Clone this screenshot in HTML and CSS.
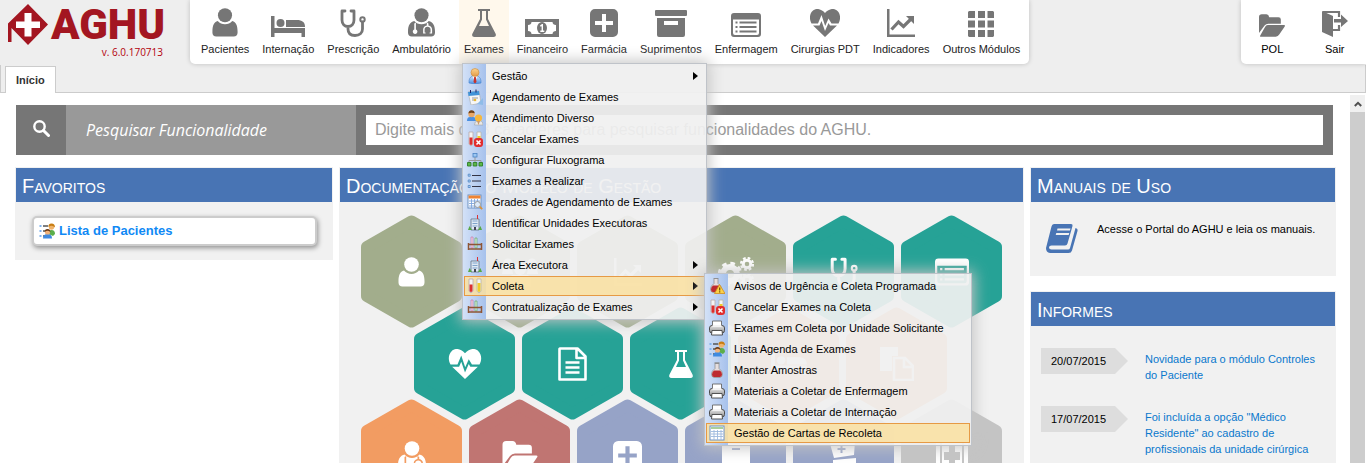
FILE: index.html
```html
<!DOCTYPE html>
<html lang="pt-BR">
<head>
<meta charset="utf-8">
<title>AGHU</title>
<link rel="stylesheet" href="styles.css">
</head>
<body>
<svg class="sprite" aria-hidden="true">
  <linearGradient id="g-skin" x1="0" y1="0" x2="0" y2="1"><stop offset="0" stop-color="#fbd48f"/><stop offset="1" stop-color="#e39a45"/></linearGradient>
  <linearGradient id="g-blue" x1="0" y1="0" x2="0" y2="1"><stop offset="0" stop-color="#cfe4fb"/><stop offset="1" stop-color="#4a8fe0"/></linearGradient>
  <linearGradient id="g-print" x1="0" y1="0" x2="0" y2="1"><stop offset="0" stop-color="#e8e8e8"/><stop offset="1" stop-color="#8c8c8c"/></linearGradient>

  <symbol id="user" viewBox="0 0 26 30"><circle cx="13" cy="7.500" r="7.300"/><path d="M5.500 13.500a10 10 0 0 0 15 0C24.500 14.500 26 18.500 26 24v1.500c0 2.500-1.500 4-4 4H4c-2.500 0-4-1.500-4-4V24c0-5.500 1.500-9.500 5.500-10.500z"/></symbol>
  <symbol id="bed" viewBox="0 0 34 21"><path d="M0 0h3.500v12H34v9h-3.500v-4h-27v4H0z"/><circle cx="9.500" cy="7" r="4"/><path d="M15 11V4h11c5 0 8 2 8 7z"/></symbol>
  <symbol id="steth" viewBox="0 0 26 28"><path d="M5 2H2v9c0 4 2.500 6.500 6 6.500s6-2.500 6-6.500V2h-3M8 17.500V20c0 4 2.500 6.500 7 6.500s7.500-2.500 7.500-6.500v-7" fill="none" stroke="currentColor" stroke-width="2.800" stroke-linejoin="round" stroke-linecap="round"/><circle cx="22.500" cy="10.500" r="2.200" fill="none" stroke="currentColor" stroke-width="2"/></symbol>
  <symbol id="doctor" viewBox="0 0 28 30"><circle cx="14" cy="7.500" r="7.300"/><path fill-rule="evenodd" d="M6.500 13.500a10 10 0 0 0 15 0C26 14.500 28 18.500 28 24v1.500c0 2.500-1.500 4-4 4H4c-2.500 0-4-1.500-4-4V24c0-5.500 2-9.500 6.500-10.500zM6.500 16v6.200a2.400 2.400 0 1 0 1.700 0V15zM19.500 15v3c-2.500.5-3.800 2.200-3.800 4.500v4h2.500v-1.200h-1v-3c0-1.800 1.200-2.800 3-2.800s3.200 1 3.200 2.800v3h-1v1.200H25v-4c0-2.300-1.300-4-3.800-4.500v-2z"/></symbol>
  <symbol id="flask" viewBox="0 0 24 28"><path fill-rule="evenodd" d="M6 0h12v2h-2v8l7.500 14.500C24.500 26.500 23.500 28 21.500 28h-19C.5 28-.5 26.500.5 24.500L8 10V2H6zM10 2v8.500L7 17h10l-3-6.500V2z"/></symbol>
  <symbol id="money" viewBox="0 0 34 18"><path fill-rule="evenodd" d="M0 0h34v18H0zM6.500 3C6.500 5 5 6 3 6v6c2 0 3.500 1 3.500 3h21c0-2 1.500-3 3.500-3V6c-2 0-3.500-1-3.500-3z"/><ellipse cx="17" cy="9" rx="5" ry="6"/><path d="M15 6.500l2-1.500h1v6.500h1.300V13h-4v-1.500h1.300V7.200l-1 .6z" fill="#fff"/></symbol>
  <symbol id="plus" viewBox="0 0 28 28"><path fill-rule="evenodd" d="M5 0h18a5 5 0 0 1 5 5v18a5 5 0 0 1-5 5H5a5 5 0 0 1-5-5V5a5 5 0 0 1 5-5zM12 5v7H5v4h7v7h4v-7h7v-4h-7V5z"/></symbol>
  <symbol id="archive" viewBox="0 0 32 27"><path fill-rule="evenodd" d="M1 0h30q1 0 1 1v4q0 1-1 1H1Q0 6 0 5V1q0-1 1-1zM2 8h28v17q0 2-2 2H4q-2 0-2-2zM9 11v4h14v-4z"/></symbol>
  <symbol id="listalt" viewBox="0 0 30 24"><path fill-rule="evenodd" d="M3 0h24q3 0 3 3v18q0 3-3 3H3q-3 0-3-3V3q0-3 3-3zM2 6.500V20q0 2 2 2h22q2 0 2-2V6.500zM4.500 8.500h2v2h-2zM8.500 8.500h17v2h-17zM4.500 13h2v2h-2zM8.500 13h17v2h-17zM4.500 17.500h2v2h-2zM8.500 17.500h17v2h-17z"/></symbol>
  <symbol id="heart" viewBox="0 0 30 28"><path d="M15 28L3 16.500h6.500l2-4.500 3.500 10 3.500-8 1.500 2.500H27zM1.500 14.500C-1 10-.5 5 2.500 2S10.500-1 15 4c4.500-5 9.500-5 12.500-2s3.500 8 1 12.500h-7L18.500 9.500l-3.300 7.500L11.500 6 8 14.500z"/></symbol>
  <symbol id="chart" viewBox="0 0 28 28"><path d="M0 0h2.500v25.500H28V28H0z"/><path d="M4.500 20.500l7-7.500 5 4.500 8-8" fill="none" stroke="currentColor" stroke-width="3.200"/><path d="M19 7h8v8z"/></symbol>
  <symbol id="grid" viewBox="0 0 26 26"><path d="M1 0h6v7H0V1zM10 0h7v7h-7zM19.500 0H25l1 1v6h-6.500zM0 9.500h7v7H0zM10 9.500h7v7h-7zM19.500 9.500H26v7h-6.500zM0 19h7v7H1l-1-1zM10 19h7v7h-7zM19.500 19H26v6l-1 1h-5.500z"/></symbol>
  <symbol id="folder" viewBox="0 0 28 24"><path d="M0 20V3q0-3 3-3h5q2.500 0 3 3h10q2.500 0 2.500 2.500V10H10q-2.500 0-4 2z"/><path d="M9.500 11.500H27q1.500 0 .7 1.500L22 21.500Q20.500 24 18 24H2q-1.500 0-.5-1.500l5-9q1-2 3-2z"/></symbol>
  <symbol id="exit" viewBox="0 0 26 26"><path d="M0 0l11 5v21L0 21z"/><path d="M1 1h16v5M17 14v5h-6" fill="none" stroke="currentColor" stroke-width="2.200"/><path d="M12 8h7V3.500L26 10l-7 6v-4.500h-7z"/></symbol>
  <symbol id="doc" viewBox="0 0 29 34"><path d="M2 1.500h17.500l8 8V32.500H1.500V2zM18.500 2v9h9M7.500 15.500h14M7.500 20.500h14M7.500 25.500h14" fill="none" stroke="currentColor" stroke-width="2.600" stroke-linejoin="round"/></symbol>
  <symbol id="gears" viewBox="0 0 36 30"><circle cx="12" cy="17" r="7" fill="none" stroke="currentColor" stroke-width="6"/><circle cx="12" cy="17" r="10.500" fill="none" stroke="currentColor" stroke-width="3.500" stroke-dasharray="4.500 3.750"/><circle cx="29" cy="7" r="3.800" fill="none" stroke="currentColor" stroke-width="3"/><circle cx="29" cy="7" r="6" fill="none" stroke="currentColor" stroke-width="2.200" stroke-dasharray="2.700 2"/><circle cx="29" cy="23" r="3.800" fill="none" stroke="currentColor" stroke-width="3"/><circle cx="29" cy="23" r="6" fill="none" stroke="currentColor" stroke-width="2.200" stroke-dasharray="2.700 2"/></symbol>
  <symbol id="users" viewBox="0 0 36 30"><circle cx="18" cy="12" r="6"/><circle cx="6" cy="6" r="4.500"/><circle cx="30" cy="6" r="4.500"/><path d="M10 18h16q4 3 3 12H7q-1-9 3-12zM1 12h9l1 5H0zM26 12h9l1 5H25z"/></symbol>
  <symbol id="copy" viewBox="0 0 34 34"><path d="M0 0h18v9h-6v15H0z"/><path d="M14 11h11l8 8v14H14zM24 11v9h9" fill="none" stroke="currentColor" stroke-width="2.500"/></symbol>
  <symbol id="hplus" viewBox="0 0 32 32"><path fill-rule="evenodd" d="M3 0h26q3 0 3 3v26q0 3-3 3H3q-3 0-3-3V3q0-3 3-3zM4 1v30h2V1zM26 1v30h2V1zM13 5v7H8v8h5v7h6v-7h5v-8h-5V5z"/></symbol>
  <symbol id="boxminus" viewBox="0 0 30 32"><path fill-rule="evenodd" d="M0 0h30v2H0zM1 4h28v28H1zM11 8v2h8V8z"/></symbol>
  <symbol id="boxplus" viewBox="0 0 30 32"><path fill-rule="evenodd" d="M0 0l26 1-1 14-20 3zM11.500 5v3h-3v2h3v3h2v-3h3V8h-3V5z"/><path d="M4 20l23-2v13H4z"/></symbol>
  <symbol id="search" viewBox="0 0 17 17"><circle cx="6.500" cy="6.500" r="5.200" fill="none" stroke="currentColor" stroke-width="2.400"/><path d="M10.500 10.500l5 5" stroke="currentColor" stroke-width="3" stroke-linecap="round"/></symbol>
  <symbol id="book" viewBox="0 0 32 30"><path d="M8 1h17q2 0 1.500 2l-5 17.500q-.5 2-2.500 2H5.500Q3 22.500 3 24.500T5.500 26.500H22q1.500 0 2-1.500l5.500-20q2.500.5 2 3L26 27.500Q25.300 30 22.500 30H4Q0 29.500 0 25L5.500 3.500Q6 1 8 1z"/><path d="M11.500 5.500h13l-.6 2H11zM10.300 10h13l-.6 2H9.700z" fill="#f1f1f1"/></symbol>

  <symbol id="m-gestao" viewBox="0 0 16 16"><path d="M2 15q-.5-6 4-7h4q4.500 1 4 7-6 2-12 0z" fill="url(#g-blue)" stroke="#4c86cf" stroke-width=".6"/><path d="M5.500 8L8 14l2.500-6z" fill="#fff"/><path d="M7.200 9h1.600l.7 5L8 15.500 6.500 14z" fill="#c8322b"/><circle cx="8" cy="4.500" r="4" fill="url(#g-skin)" stroke="#c98a3a" stroke-width=".6"/></symbol>
  <symbol id="m-cal" viewBox="0 0 16 16"><path d="M1 3l11-1 2 12-10 2z" fill="#f7f7f7" stroke="#aaa" stroke-width=".6"/><path d="M1 3l11-1 .6 4L1.500 7z" fill="#4193d8"/><path d="M3.500 1v3M9 .5v3" stroke="#226" stroke-width="1"/><path d="M5 9h6M5 11h4" stroke="#999"/><circle cx="8" cy="11" r="1.300" fill="#e8b830"/><path d="M10 15l6-6v7z" fill="#8fbce8"/></symbol>
  <symbol id="m-pair" viewBox="0 0 16 16"><path d="M0 11q0-4 3-4h3q3 0 3 4z" fill="#4a8fe0"/><circle cx="4.500" cy="4" r="3.200" fill="#e9a867"/><path d="M1.500 3.500q0-3 3-3.300 3 0 3.200 3Q4 2 1.500 3.500z" fill="#70431b"/><path d="M7.500 15q0-4 3-4h3q2.500 0 2.500 4z" fill="#e8e8e8" stroke="#999" stroke-width=".5"/><circle cx="11.500" cy="8" r="3.600" fill="#f6b73c"/><path d="M10 11l1.500 4 1.500-4z" fill="#c96"/></symbol>
  <symbol id="m-tubes" viewBox="0 0 16 16"><path d="M2 1h4v12q-2 3.500-4 0z" fill="#f4f4f4" stroke="#b9a9a9" stroke-width=".8"/><path d="M2.500 6.500h3V13q-1.500 2-3 0z" fill="#dc2f2f"/><path d="M10 1h4v12q-2 3.500-4 0z" fill="#f4f4f4" stroke="#b9b5a9" stroke-width=".8"/><path d="M10.500 5h3v8q-1.500 2-3 0z" fill="#efcb2a"/></symbol>
  <symbol id="m-tubesx" viewBox="0 0 16 16"><use href="#m-tubes"/><rect x="7" y="7" width="9" height="9" rx="3" fill="#e12d2d"/><path d="M9.500 9.500l4 4m0-4l-4 4" stroke="#fff" stroke-width="1.600"/></symbol>
  <symbol id="m-org" viewBox="0 0 16 16"><path d="M8 5v3M2 11V8.500h12V11M8 8v3" fill="none" stroke="#999"/><rect x="6" y="1.500" width="4" height="3.500" fill="#9cc7f2" stroke="#4a83c4" stroke-width=".8"/><path d="M.5 10.500H4V14H.5zM6.200 10.500h3.600V14H6.200zM12 10.500h3.500V14H12z" fill="#5cb848" stroke="#2f7d27" stroke-width=".9"/></symbol>
  <symbol id="m-list" viewBox="0 0 16 16"><path d="M5 2.500h9M5 8h9M5 13.500h9" stroke="#334" stroke-width="1.200"/><path d="M1.200 1.200h2v2h-2zM1.200 7h2v2h-2zM1.200 12.500h2v2h-2z" fill="#c4dcf5" stroke="#4a83c4" stroke-width=".8"/></symbol>
  <symbol id="m-table" viewBox="0 0 16 16"><rect x="1" y="1" width="14" height="14" fill="#fff" stroke="#6f93c4"/><path d="M2 2h12v2H2z" fill="#a9cf9c"/><path d="M2 6.500h12M2 9h12M2 11.500h12M5 5v10M8.500 5v10M12 5v10" stroke="#9db9de" stroke-width=".9"/></symbol>
  <symbol id="m-grades" viewBox="0 0 16 16"><rect x="1" y="1" width="13" height="13" fill="#fff" stroke="#6f93c4"/><path d="M1.500 1.500h12v3h-12z" fill="#ee8434"/><path d="M2 7h11M2 9.500h8M2 12h7M4.500 5v9M7.500 5v9M10.500 5v4" stroke="#7fa6dc" stroke-width=".9"/><circle cx="10.500" cy="10.500" r="3" fill="#dceafa" stroke="#999"/><path d="M12.700 12.700l2.500 2.500" stroke="#d8923c" stroke-width="1.800"/></symbol>
  <symbol id="m-build" viewBox="0 0 16 16"><path d="M4 4h8v11H4z" fill="#dfe9f4" stroke="#6c7d92" stroke-width=".9"/><path d="M10.500 0v4" stroke="#d33"/><path d="M5.500 6h5M5.500 8.500h5M5.500 11h5" stroke="#7fa3cc"/><path d="M7 12h2v3H7z" fill="#445"/><path d="M1 15l1.500-4L5 15zM11 15l2.500-4L15 15z" fill="#58a846"/></symbol>
  <symbol id="m-rack" viewBox="0 0 16 16"><path d="M4 1h2v11H4z" fill="#f0d5e0" stroke="#b59" stroke-width=".5"/><path d="M8 2h2v10H8z" fill="#d3efd8" stroke="#484" stroke-width=".5"/><path d="M1.500 7v7M14.500 7v7M1 8.500h14M1 13h14" fill="none" stroke="#8e5535" stroke-width="1.500"/></symbol>
  <symbol id="m-flask" viewBox="0 0 16 16"><path d="M6 1.500h4v5q3.500 2.500 3.500 5.500 0 3-2.500 3.500H5Q2.500 15 2.500 12 2.500 9 6 6.500z" fill="#e6dede" stroke="#888" stroke-width=".7"/><path d="M5 8.500h6q2 1.500 2 4 0 2.300-2 2.500H5q-2 0-2-2.500 0-2.500 2-4z" fill="#bd2b30"/><path d="M5.500 1h5" stroke="#888" stroke-width="1.300"/></symbol>
  <symbol id="m-flaskw" viewBox="0 0 16 16"><g transform="translate(-1 -1)"><use href="#m-flask" width="16" height="16"/></g><path d="M10.500 6.500L16 15.500H5.500z" fill="#fbd24a" stroke="#d38c17" stroke-width=".8"/><path d="M10.700 9.500v3M10.700 13.300v1.200" stroke="#6b4a00" stroke-width="1.200"/></symbol>
  <symbol id="m-print" viewBox="0 0 16 16"><path d="M3.500 1h9v6h-9z" fill="#fff" stroke="#666" stroke-width=".9"/><rect x=".5" y="5.500" width="15" height="7.500" rx="2.500" fill="url(#g-print)" stroke="#4d4d4d"/><path d="M3.500 5h9v2h-9z" fill="#f3f3f3"/><path d="M3 10.500h10l.5 4.500h-11z" fill="#fff" stroke="#444" stroke-width=".9"/></symbol>
  <symbol id="m-people" viewBox="0 0 16 16"><path d="M4 3h5M4 8h4M4 13h3" stroke="#555" stroke-width="1.300"/><path d="M.5 2h2v2h-2zM.5 7h2v2h-2zM.5 12h2v2h-2z" fill="#7fb2ee"/><path d="M9.500 11q0-4 3-4 3.500 0 3.500 4l-2 2z" fill="#5cae4a"/><circle cx="12.500" cy="4" r="2.700" fill="#efb36b"/><path d="M9.500 4Q9 .5 12.500.5t3.500 4Q13 1.500 9.500 4z" fill="#c87d12"/><path d="M4 15.500q0-4.500 4.500-4.500t4.500 4.500z" fill="#3f8ae0"/><circle cx="8.500" cy="9" r="2.600" fill="#f0b27c"/><path d="M5.800 9Q5.500 6 8.500 6t2.900 3Q8.500 6.500 5.800 9z" fill="#6d3d17"/></symbol>

  <symbol id="hex" viewBox="0 0 101 113"><path d="M50.500 6.500L95 32v49l-44.500 25.500L6 81V32z" fill="currentColor" stroke="currentColor" stroke-width="12" stroke-linejoin="round"/></symbol>
</svg>

<header class="topbar">
  <div class="brand">
    <div class="brand-name">
      <svg class="brand-mark" width="42" height="42" viewBox="0 0 42 42" aria-hidden="true"><path d="M21 0l20 20.500L21 41 4.500 24v14H1V19.500z" fill="#a31621"/><path d="M17.500 9h7v8.500H33v6.500h-8.500v8.500h-7V24H9v-6.500h8.500z" fill="#fff"/></svg>
      <span>AGHU</span>
    </div>
    <div class="version">v. 6.0.170713</div>
  </div>
  <nav class="modules" aria-label="Módulos">
    <a class="module" href="#"><svg width="26" height="29"><use href="#user"/></svg><span>Pacientes</span></a>
    <a class="module" href="#"><svg width="34" height="21"><use href="#bed"/></svg><span>Internação</span></a>
    <a class="module" href="#"><svg width="26" height="28"><use href="#steth"/></svg><span>Prescrição</span></a>
    <a class="module" href="#"><svg width="27" height="29"><use href="#doctor"/></svg><span>Ambulatório</span></a>
    <div class="module-open">
      <a class="module" href="#"><svg width="24" height="28"><use href="#flask"/></svg><span>Exames</span></a>
      <ul class="menu menu-main">
        <li><a href="#"><svg><use href="#m-gestao"/></svg>Gestão<i class="arrow"></i></a></li>
        <li><a href="#"><svg><use href="#m-cal"/></svg>Agendamento de Exames</a></li>
        <li><a href="#"><svg><use href="#m-pair"/></svg>Atendimento Diverso</a></li>
        <li><a href="#"><svg><use href="#m-tubesx"/></svg>Cancelar Exames</a></li>
        <li><a href="#"><svg><use href="#m-org"/></svg>Configurar Fluxograma</a></li>
        <li><a href="#"><svg><use href="#m-list"/></svg>Exames a Realizar</a></li>
        <li><a href="#"><svg><use href="#m-grades"/></svg>Grades de Agendamento de Exames</a></li>
        <li><a href="#"><svg><use href="#m-build"/></svg>Identificar Unidades Executoras</a></li>
        <li><a href="#"><svg><use href="#m-rack"/></svg>Solicitar Exames</a></li>
        <li><a href="#"><svg><use href="#m-build"/></svg>Área Executora<i class="arrow"></i></a></li>
        <li><a class="active" href="#"><svg><use href="#m-tubes"/></svg>Coleta<i class="arrow"></i></a>
          <ul class="menu menu-sub">
            <li><a href="#"><svg><use href="#m-flaskw"/></svg>Avisos de Urgência e Coleta Programada</a></li>
            <li><a href="#"><svg><use href="#m-tubesx"/></svg>Cancelar Exames na Coleta</a></li>
            <li><a href="#"><svg><use href="#m-print"/></svg>Exames em Coleta por Unidade Solicitante</a></li>
            <li><a href="#"><svg><use href="#m-people"/></svg>Lista Agenda de Exames</a></li>
            <li><a href="#"><svg><use href="#m-flask"/></svg>Manter Amostras</a></li>
            <li><a href="#"><svg><use href="#m-print"/></svg>Materiais a Coletar de Enfermagem</a></li>
            <li><a href="#"><svg><use href="#m-print"/></svg>Materiais a Coletar de Internação</a></li>
            <li><a class="active" href="#"><svg><use href="#m-table"/></svg>Gestão de Cartas de Recoleta</a></li>
          </ul>
        </li>
        <li><a href="#"><svg><use href="#m-rack"/></svg>Contratualização de Exames<i class="arrow"></i></a></li>
      </ul>
    </div>
    <a class="module" href="#"><svg width="34" height="18"><use href="#money"/></svg><span>Financeiro</span></a>
    <a class="module" href="#"><svg width="28" height="28"><use href="#plus"/></svg><span>Farmácia</span></a>
    <a class="module" href="#"><svg width="32" height="27"><use href="#archive"/></svg><span>Suprimentos</span></a>
    <a class="module" href="#"><svg width="30" height="24"><use href="#listalt"/></svg><span>Enfermagem</span></a>
    <a class="module" href="#"><svg width="30" height="28"><use href="#heart"/></svg><span>Cirurgias PDT</span></a>
    <a class="module" href="#"><svg width="28" height="28"><use href="#chart"/></svg><span>Indicadores</span></a>
    <a class="module" href="#"><svg width="26" height="26"><use href="#grid"/></svg><span>Outros Módulos</span></a>
  </nav>
  <nav class="session" aria-label="Sessão">
    <a class="module" href="#"><svg width="26" height="23"><use href="#folder"/></svg><span>POL</span></a>
    <a class="module" href="#"><svg width="26" height="26"><use href="#exit"/></svg><span>Sair</span></a>
  </nav>
</header>

<div class="tabs"><button class="tab" type="button">Início</button></div>

<main class="page">
  <div class="content">
    <form class="search">
      <button class="search-go" type="button" aria-label="Pesquisar"><svg width="17" height="17"><use href="#search"/></svg></button>
      <label class="search-label" for="q">Pesquisar Funcionalidade</label>
      <div class="search-field"><input id="q" type="text" placeholder="Digite mais de 3 caracteres para pesquisar funcionalidades do AGHU."></div>
    </form>
    <div class="columns">
      <section class="panel">
        <h2>Favoritos</h2>
        <div class="favorites"><a class="favorite" href="#"><svg width="16" height="16"><use href="#m-people"/></svg>Lista de Pacientes</a></div>
      </section>
      <section class="panel">
        <h2>Documentação do Modelo de Gestão</h2>
        <div class="hive">
          <div class="hive-row">
            <a class="hex green" href="#" aria-label="Pacientes"><svg class="cell"><use href="#hex"/></svg><svg class="glyph" width="27" height="30"><use href="#user"/></svg></a>
            <a class="hex green" href="#" aria-label="Equipe"><svg class="cell"><use href="#hex"/></svg><svg class="glyph" width="36" height="30"><use href="#users"/></svg></a>
            <a class="hex green" href="#" aria-label="Indicadores"><svg class="cell"><use href="#hex"/></svg><svg class="glyph" width="36" height="28"><use href="#chart"/></svg></a>
            <a class="hex green" href="#" aria-label="Configuração"><svg class="cell"><use href="#hex"/></svg><svg class="glyph" width="36" height="30"><use href="#gears"/></svg></a>
            <a class="hex teal" href="#" aria-label="Prescrição"><svg class="cell"><use href="#hex"/></svg><svg class="glyph" width="28" height="30"><use href="#steth"/></svg></a>
            <a class="hex teal" href="#" aria-label="Enfermagem"><svg class="cell"><use href="#hex"/></svg><svg class="glyph" width="34" height="28"><use href="#listalt"/></svg></a>
          </div>
          <div class="hive-row shifted">
            <a class="hex teal" href="#" aria-label="Cirurgias"><svg class="cell"><use href="#hex"/></svg><svg class="glyph" width="34" height="30"><use href="#heart"/></svg></a>
            <a class="hex teal" href="#" aria-label="Documentos"><svg class="cell"><use href="#hex"/></svg><svg class="glyph" width="29" height="34"><use href="#doc"/></svg></a>
            <a class="hex teal" href="#" aria-label="Exames"><svg class="cell"><use href="#hex"/></svg><svg class="glyph" width="28" height="28"><use href="#flask"/></svg></a>
            <a class="hex orange" href="#" aria-label="Internação"><svg class="cell"><use href="#hex"/></svg><svg class="glyph" width="36" height="22"><use href="#bed"/></svg></a>
            <a class="hex orange" href="#" aria-label="Cópias"><svg class="cell"><use href="#hex"/></svg><svg class="glyph" width="34" height="34"><use href="#copy"/></svg></a>
          </div>
          <div class="hive-row">
            <a class="hex orange" href="#" aria-label="Ambulatório"><svg class="cell"><use href="#hex"/></svg><svg class="glyph" width="28" height="30"><use href="#doctor"/></svg></a>
            <a class="hex red" href="#" aria-label="POL"><svg class="cell"><use href="#hex"/></svg><svg class="glyph" width="36" height="30"><use href="#folder"/></svg></a>
            <a class="hex violet" href="#" aria-label="Farmácia"><svg class="cell"><use href="#hex"/></svg><svg class="glyph" width="29" height="29"><use href="#plus"/></svg></a>
            <a class="hex violet" href="#" aria-label="Estoque"><svg class="cell"><use href="#hex"/></svg><svg class="glyph" width="30" height="32"><use href="#boxminus"/></svg></a>
            <a class="hex violet" href="#" aria-label="Compras"><svg class="cell"><use href="#hex"/></svg><svg class="glyph" width="30" height="32"><use href="#boxplus"/></svg></a>
            <a class="hex gray" href="#" aria-label="Hospital"><svg class="cell"><use href="#hex"/></svg><svg class="glyph" width="32" height="32"><use href="#hplus"/></svg></a>
          </div>
        </div>
      </section>
      <div class="side">
        <section class="panel">
          <h2>Manuais de Uso</h2>
          <div class="manual"><svg width="32" height="30"><use href="#book"/></svg><p>Acesse o Portal do AGHU e leia os manuais.</p></div>
        </section>
        <section class="panel">
          <h2>Informes</h2>
          <div class="news">
            <article class="news-item"><time datetime="2015-07-20">20/07/2015</time><a href="#">Novidade para o módulo Controles do Paciente</a></article>
            <article class="news-item"><time datetime="2015-07-17">17/07/2015</time><a href="#">Foi incluída a opção "Médico Residente" ao cadastro de profissionais da unidade cirúrgica</a></article>
          </div>
        </section>
      </div>
    </div>
  </div>
  <div class="scrollbar" aria-hidden="true">
    <div class="scroll-up"><svg width="8" height="6" viewBox="0 0 8 6"><path d="M.8 5L4 1.800 7.200 5" fill="none" stroke="#505050" stroke-width="2"/></svg></div>
    <div class="scroll-thumb"></div>
  </div>
</main>
</body>
</html>
```
FILE: styles.css
```css
* { box-sizing: border-box; }
body {
  margin: 0;
  height: 100vh;
  overflow: hidden;
  display: flex;
  flex-direction: column;
  background: #eee;
  font: 11px/16px "Liberation Sans", Arial, sans-serif;
  color: #000;
}
a { color: inherit; text-decoration: none; }
h2, p, ul { margin: 0; padding: 0; }
svg { flex: none; fill: currentColor; }
.sprite { position: absolute; width: 0; height: 0; }

/* top bar */
.topbar {
  position: relative;
  z-index: 2;
  display: flex;
  height: 65px;
  flex: none;
}
.brand { width: 190px; flex: none; padding: 5px 0 0 7px; }
.brand-name {
  display: flex;
  align-items: center;
  gap: 2px;
  height: 40px;
  color: #a31621;
  font: 900 42px/40px Roboto, sans-serif;
}
.version {
  width: 156px;
  text-align: right;
  font: 10px/14px "Open Sans", sans-serif;
  color: #b3000c;
}
.modules, .session {
  display: flex;
  height: 64px;
  background: #fff;
  box-shadow: 0 0 5px rgba(0, 0, 0, .2);
}
.modules { gap: 3px; padding: 0 4px 0 6px; border-radius: 0 0 5px 5px; }
.session { margin-left: auto; width: 125px; border-radius: 0 0 0 5px; }
.session .module { flex: 1; color: #000; }
.module {
  display: flex;
  flex-direction: column;
  align-items: center;
  justify-content: flex-end;
  height: 64px;
  padding: 0 5px 7px;
  gap: 4px;
  white-space: nowrap;
  color: #222;
}
.module svg { color: #767676; }
.module-open { position: relative; background: #fff8ec; }

/* menus */
.menu {
  position: absolute;
  list-style: none;
  padding: 2px 1px 1px;
  border: 1px solid #bfc3c9;
  background: linear-gradient(90deg, #d3e1f7, #a6c1ec) 0 0 / 23px 100% no-repeat, rgba(240, 240, 240, .93);
  box-shadow: 0 0 14px 2px #c4c4c4;
  white-space: nowrap;
}
.menu-main { top: 63px; left: 3px; width: 245px; }
.menu-sub { top: -3px; left: 240px; width: 268px; }
.menu li { position: relative; margin-bottom: 1px; }
.menu a {
  display: flex;
  align-items: center;
  gap: 9px;
  height: 20px;
  padding: 0 6px 0 2px;
  border: 1px solid transparent;
}
.menu a.active { border-color: #e69a45; background: rgba(250, 225, 160, .85); }
.menu svg { width: 16px; height: 16px; }
.arrow {
  margin-left: auto;
  border: 4px solid transparent;
  border-left: 5px solid #000;
  border-right: 0;
}

/* tabs */
.tabs {
  flex: none;
  display: flex;
  height: 28px;
  padding: 1px 0 0 4px;
  border: 1px solid #ccc;
  border-top: 0;
}
.tab {
  height: 27px;
  padding: 0 10px;
  border: 1px solid #ccc;
  border-bottom: 0;
  background: #fff;
  font: bold 11px/16px "Liberation Sans", Arial, sans-serif;
  color: #333;
}

/* page */
.page {
  flex: 1;
  min-height: 0;
  display: flex;
  overflow: hidden;
  background: #fff;
}
.content { flex: 1; min-width: 0; padding: 12px 14px 0 15px; }
.search { display: flex; height: 50px; margin: 0 3px 12px 1px; background: #767676; }
.search-go {
  width: 50px;
  padding: 0;
  border: 0;
  background: #767676;
  color: #fff;
}
.search-label {
  width: 290px;
  padding-left: 20px;
  background: #999;
  color: #fff;
  font: italic 16px/50px "Open Sans", sans-serif;
}
.search-field { flex: 1; display: flex; padding: 10px; }
.search-field input {
  flex: 1;
  min-width: 0;
  border: 0;
  padding: 0 9px;
  background: #fff;
  font: 16px/30px "Liberation Sans", Arial, sans-serif;
}
.search-field input::placeholder { color: #999; opacity: 1; }

.columns { display: grid; grid-template-columns: 318px 1fr 306px; gap: 6px; align-items: start; }
.panel { padding: 1px; background: #f1f1f1; }
.panel h2 {
  padding: 2px 6px 0;
  background: #4874b4;
  color: #fff;
  font: 20px/32px "Liberation Sans", Arial, sans-serif;
  font-variant: small-caps;
  white-space: nowrap;
}
.favorites { padding: 14px 15px 13px 16px; }
.favorite {
  display: flex;
  align-items: center;
  gap: 4px;
  height: 30px;
  padding: 0 5px;
  border: 2px solid #ccc;
  border-radius: 5px;
  background: #fff;
  box-shadow: 1px 2px 5px rgba(0, 0, 0, .4);
  font-size: 13px;
  font-weight: bold;
  color: #1089f5;
}

/* hexagon map */
.hive { padding: 13px 0 20px 21px; }
.hive-row { display: flex; gap: 7px; }
.hive-row + .hive-row { margin-top: -21px; }
.shifted { padding-left: 53px; }
.hex { display: grid; place-items: center; flex: none; }
.hex > svg { grid-area: 1 / 1; }
.cell { width: 101px; height: 113px; }
.glyph { color: #fff; }
.green { color: #a2ad8c; }
.teal { color: #26a296; }
.orange { color: #f29c62; }
.red { color: #c07572; }
.violet { color: #96a3c7; }
.gray { color: #c4c4c4; }

/* side column */
.side { display: flex; flex-direction: column; gap: 15px; }
.manual { display: flex; gap: 19px; height: 73px; padding: 19px 15px 0; color: #4874b4; }
.manual svg { margin-top: 2px; }
.manual p { color: #000; }
.news { display: flex; flex-direction: column; gap: 10px; padding: 22px 20px 60px 10px; }
.news-item { display: flex; gap: 17px; min-height: 48px; }
.news-item time {
  width: 87px;
  height: 26px;
  flex: none;
  padding-left: 10px;
  line-height: 26px;
  background: #ddd;
  clip-path: polygon(0 0, 74px 0, 100% 50%, 74px 100%, 0 100%);
}
.news-item a { padding-top: 3px; color: #0a78cd; }

/* scrollbar */
.scrollbar { width: 16px; flex: none; display: flex; flex-direction: column; padding: 2px 1px 0 0; background: #fff; }
.scroll-up { display: flex; align-items: center; justify-content: center; height: 17px; background: #f0f0f0; }
.scroll-thumb { flex: 1; background: #cdcdcd; }
```
